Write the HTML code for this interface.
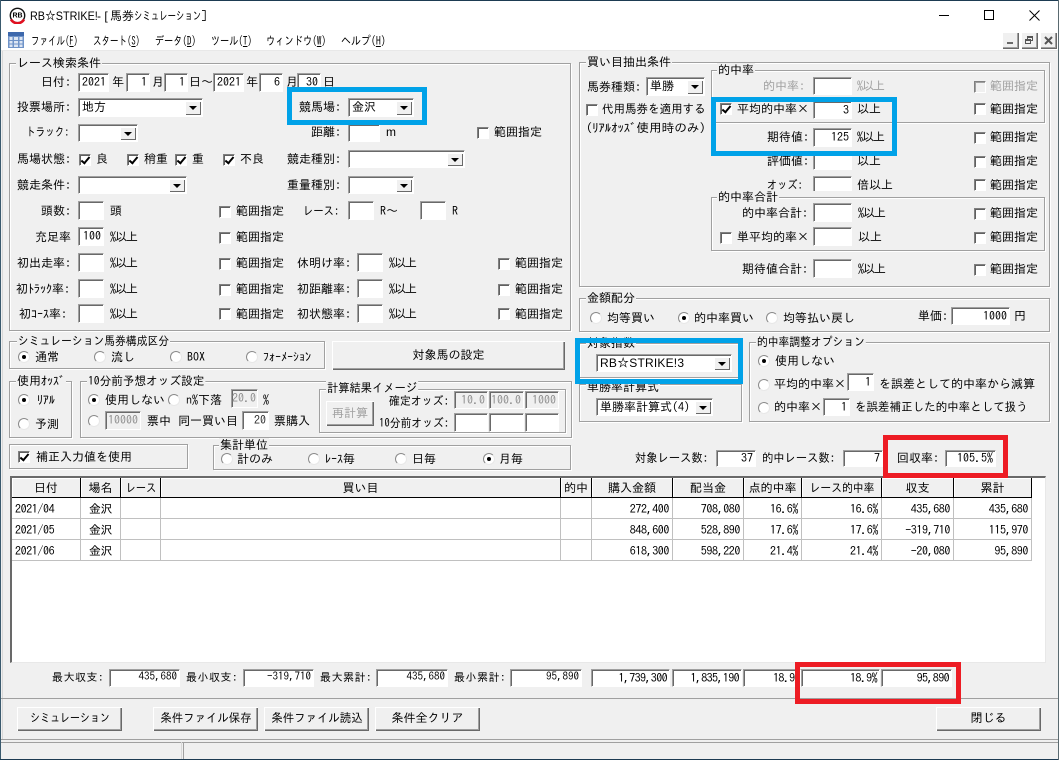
<!DOCTYPE html>
<html lang="ja"><head><meta charset="utf-8"><title>RB☆STRIKE!</title>
<style>
html,body{margin:0;padding:0;width:1059px;height:760px;overflow:hidden;background:#f0f0f0}
body{position:relative;font:12px/14px "IPAGothic","Noto Sans CJK JP",sans-serif;color:#000}
p{position:absolute;margin:0;white-space:nowrap;height:14px;line-height:14px;transform-origin:left center}
.y{color:#a0a0a0}
.q{letter-spacing:-1px}
.lg{background:#f0f0f0;padding:0 1px}
.g{position:absolute;box-sizing:border-box;border:1px solid #a0a0a0;box-shadow:1px 1px 0 #fff,inset 1px 1px 0 #fff}
em{position:absolute;display:block;box-sizing:border-box;font-style:normal;background:#fff;border:1px solid;border-color:#a0a0a0 #fff #fff #a0a0a0;box-shadow:inset 1px 1px 0 #696969;text-align:right;padding-right:2px;line-height:16px;white-space:nowrap;overflow:hidden}
em.k{text-align:left;padding-left:3px;line-height:17px}
em.d{background:#f0f0f0;color:#909090}
em u{position:absolute;right:1px;top:2px;bottom:1px;width:16px;background:#f0f0f0;box-shadow:inset 1px 1px 0 #fff,inset -1px -1px 0 #696969;text-decoration:none}
em u::after{content:"";position:absolute;left:4px;top:5px;border:4px solid transparent;border-top:4px solid #000;border-bottom:0}
i{position:absolute;display:block;box-sizing:border-box;width:12px;height:12px;background:#fff;border:1px solid;border-color:#808080 #fff #fff #808080;box-shadow:inset 1px 1px 0 #606060,0 0 0 0 #fff}
i.on::after{content:"";position:absolute;left:3px;top:0;width:3px;height:7px;border:solid #000;border-width:0 2px 2px 0;transform:rotate(40deg)}
i.gy{background:#f0f0f0;box-shadow:inset 1px 1px 0 #a0a0a0}
b{position:absolute;display:block;box-sizing:border-box;width:12px;height:12px;border-radius:50%;background:#fff;border:1px solid;border-color:#8a8a8a #e8e8e8 #e8e8e8 #8a8a8a}
b.on::after{content:"";position:absolute;left:3px;top:3px;width:4px;height:4px;border-radius:50%;background:#000}
.btn{position:absolute;box-sizing:border-box;background:#f0f0f0;text-align:center;box-shadow:inset 1px 1px 0 #fff,inset -1px -1px 0 #696969,inset -2px -2px 0 #a0a0a0;white-space:nowrap}
.hl{position:absolute;box-sizing:border-box;border:5px solid #00a2e8;z-index:5}
.rd{position:absolute;box-sizing:border-box;border:5px solid #ed1c24;z-index:5}
table{position:absolute;left:12px;top:478px;border-collapse:separate;border-spacing:0;table-layout:fixed;width:1020px}
th{height:20px;box-sizing:border-box;padding:0;font-weight:normal;background:#f0f0f0;border-right:1px solid #000;border-bottom:1px solid #000;box-shadow:inset 1px 1px 0 #fff;white-space:nowrap;overflow:hidden}
td{height:21px;box-sizing:border-box;padding:1px 3px 0 3px;border-right:1px solid #c0c0c0;border-bottom:1px solid #c0c0c0;text-align:right;white-space:nowrap;background:#fff;letter-spacing:-.4px}
.s{font-size:11px;letter-spacing:.5px}
.v{font-size:11px;letter-spacing:0;line-height:14px}
.n{letter-spacing:-.6px}
</style></head><body>
<div style="position:absolute;left:0;top:0;width:1059px;height:50px;background:#fff"></div>
<div style="position:absolute;left:0;top:0;width:1059px;height:1px;background:#1d3b52"></div>
<div style="position:absolute;left:0;top:0;width:1px;height:760px;background:#3a5a6e"></div>
<div style="position:absolute;left:0;top:759px;width:1059px;height:1px;background:#1d3b52"></div>
<div style="position:absolute;left:1058px;top:0;width:1px;height:760px;background:#5a6a70"></div>
<svg style="position:absolute;left:9px;top:7px" width="17" height="17" viewBox="0 0 17 17"><circle cx="8.500" cy="8.500" r="7.200" fill="#fff" stroke="#111" stroke-width="1.400"/><path d="M2 12.500a7.600 7.600 0 0 0 13 0" fill="none" stroke="#e01020" stroke-width="2.600"/><text x="8.500" y="10.500" font-size="7" font-weight="700" font-family="Liberation Sans" text-anchor="middle">RB</text></svg>
<p style="left:30px;top:9px;font-family:'Liberation Sans','IPAGothic',sans-serif;font-size:12px;transform:scaleX(.9)">RB☆STRIKE!</p>
<p style="left:97px;top:9px;font-family:'Liberation Sans',sans-serif;font-size:12px">- [</p>
<p style="left:110px;top:9px">馬券</p>
<p style="left:134px;top:9px;transform:scaleX(.7)">シミュレーション</p>
<p style="left:201px;top:9px">]</p>
<div style="position:absolute;left:939px;top:15px;width:10px;height:1px;background:#000"></div>
<div style="position:absolute;left:984px;top:10px;width:10px;height:10px;box-sizing:border-box;border:1px solid #000"></div>
<svg style="position:absolute;left:1029px;top:10px" width="11" height="11"><path d="M.5.5l10 10M10.500.5l-10 10" stroke="#000" fill="none"/></svg>
<svg style="position:absolute;left:8px;top:32px" width="16" height="16"><rect width="16" height="16" fill="#6f93c8"/><rect y="0" width="16" height="4" fill="#3d68ac"/><path d="M1.500 5h3v3h-3zM6 5h4v3H6zM11.500 5h3v3h-3zM1.500 9h3v2.500h-3zM6 9h4v2.500H6zM11.500 9h3v2.500h-3zM1.500 12.500h3V15h-3zM6 12.500h4V15H6zM11.500 12.500h3V15h-3z" fill="#dde6f3"/></svg>
<p style="left:31px;top:34px;transform:scaleX(.71)">ファイル(<span style="text-decoration:underline">F</span>)</p>
<p style="left:93px;top:34px;transform:scaleX(.71)">スタート(<span style="text-decoration:underline">S</span>)</p>
<p style="left:155px;top:34px;transform:scaleX(.76)">データ(<span style="text-decoration:underline">D</span>)</p>
<p style="left:211px;top:34px;transform:scaleX(.76)">ツール(<span style="text-decoration:underline">T</span>)</p>
<p style="left:266px;top:34px;transform:scaleX(.77)">ウィンドウ(<span style="text-decoration:underline">W</span>)</p>
<p style="left:341px;top:34px;transform:scaleX(.83)">ヘルプ(<span style="text-decoration:underline">H</span>)</p>
<div class="btn" style="left:1002px;top:32px;width:17px;height:17px"><div style="position:absolute;left:5px;top:10px;width:6px;height:2px;background:#6a6a6a"></div></div>
<div class="btn" style="left:1021px;top:32px;width:17px;height:17px"><div style="position:absolute;left:6px;top:4px;width:6px;height:5px;border:1px solid #555;border-top-width:2px;box-sizing:border-box"></div><div style="position:absolute;left:4px;top:7px;width:6px;height:5px;border:1px solid #555;border-top-width:2px;box-sizing:border-box;background:#f0f0f0"></div></div>
<div class="btn" style="left:1040px;top:32px;width:17px;height:17px"><svg style="position:absolute;left:4px;top:4px" width="9" height="9"><path d="M1 1l7 7M8 1L1 8" stroke="#555" stroke-width="2"/></svg></div>
<div style="position:absolute;left:1px;top:50px;width:1057px;height:1px;background:#e8e8e8"></div>
<div style="position:absolute;left:2px;top:51px;width:1px;height:688px;background:#d8d8d8"></div>

<!-- race search -->
<div class="g" style="left:9px;top:63px;width:562px;height:268px"></div>
<p class="lg" style="left:16px;top:56px">レース検索条件</p>
<p style="left:41px;top:75px">日付:</p>
<em style="left:78px;top:73px;width:31px;height:19px">2021</em><p style="left:112px;top:75px">年</p>
<em style="left:126px;top:73px;width:24px;height:19px">1</em><p style="left:152px;top:75px">月</p>
<em style="left:164px;top:73px;width:24px;height:19px">1</em><p style="left:189px;top:75px">日〜</p>
<em style="left:213px;top:73px;width:31px;height:19px">2021</em><p style="left:246px;top:75px">年</p>
<em style="left:259px;top:73px;width:24px;height:19px">6</em><p style="left:286px;top:75px">月</p>
<em style="left:297px;top:73px;width:24px;height:19px">30</em><p style="left:323px;top:75px">日</p>

<p style="left:17px;top:100px">投票場所:</p>
<em class="k" style="left:78px;top:98px;width:125px;height:19px">地方<u></u></em>
<p style="left:299px;top:100px">競馬場:</p>
<em class="k" style="left:348px;top:98px;width:66px;height:19px">金沢<u></u></em>
<div class="hl" style="left:287px;top:87px;width:140px;height:38px"></div>

<p style="left:26px;top:125px;transform:scaleX(.8)">トラック:</p>
<em class="k" style="left:78px;top:124px;width:60px;height:18px"><u></u></em>
<p style="left:311px;top:125px">距離:</p>
<em style="left:348px;top:124px;width:32px;height:18px"></em>
<p style="left:386px;top:125px;font-family:'Liberation Sans',sans-serif">m</p>
<i style="left:477px;top:127px"></i><p style="left:494px;top:125px">範囲指定</p>

<p style="left:17px;top:152px">馬場状態:</p>
<i class="on" style="left:79px;top:154px"></i><p style="left:96px;top:152px">良</p>
<i class="on" style="left:127px;top:154px"></i><p style="left:144px;top:152px">稍重</p>
<i class="on" style="left:175px;top:154px"></i><p style="left:192px;top:152px">重</p>
<i class="on" style="left:223px;top:154px"></i><p style="left:240px;top:152px">不良</p>
<p style="left:287px;top:152px">競走種別:</p>
<em class="k" style="left:348px;top:150px;width:117px;height:18px"><u></u></em>

<p style="left:17px;top:178px">競走条件:</p>
<em class="k" style="left:78px;top:176px;width:109px;height:18px"><u></u></em>
<p style="left:287px;top:178px">重量種別:</p>
<em class="k" style="left:348px;top:176px;width:66px;height:18px"><u></u></em>

<p style="left:41px;top:204px">頭数:</p>
<em style="left:78px;top:201px;width:26px;height:19px"></em><p style="left:110px;top:204px">頭</p>
<i style="left:219px;top:206px"></i><p style="left:236px;top:204px">範囲指定</p>
<p style="left:303px;top:204px;transform:scaleX(.86)">レース:</p>
<em style="left:348px;top:201px;width:26px;height:19px"></em><p style="left:380px;top:204px">R〜</p>
<em style="left:420px;top:201px;width:26px;height:19px"></em><p style="left:452px;top:204px">R</p>

<p style="left:35px;top:230px">充足率</p>
<em style="left:78px;top:227px;width:26px;height:19px">100</em><p class="q" style="left:110px;top:230px">%以上</p>
<i style="left:219px;top:232px"></i><p style="left:236px;top:230px">範囲指定</p>

<p style="left:17px;top:256px">初出走率:</p>
<em style="left:78px;top:253px;width:26px;height:19px"></em><p class="q" style="left:110px;top:256px">%以上</p>
<i style="left:219px;top:258px"></i><p style="left:236px;top:256px">範囲指定</p>
<p style="left:297px;top:256px">休明け率:</p>
<em style="left:357px;top:253px;width:26px;height:19px"></em><p class="q" style="left:389px;top:256px">%以上</p>
<i style="left:498px;top:258px"></i><p style="left:515px;top:256px">範囲指定</p>

<p style="left:16px;top:282px">初ﾄﾗｯｸ率:</p>
<em style="left:78px;top:279px;width:26px;height:19px"></em><p class="q" style="left:110px;top:282px">%以上</p>
<i style="left:219px;top:284px"></i><p style="left:236px;top:282px">範囲指定</p>
<p style="left:297px;top:282px">初距離率:</p>
<em style="left:357px;top:279px;width:26px;height:19px"></em><p class="q" style="left:389px;top:282px">%以上</p>
<i style="left:498px;top:284px"></i><p style="left:515px;top:282px">範囲指定</p>

<p style="left:19px;top:307px">初ｺｰｽ率:</p>
<em style="left:78px;top:304px;width:26px;height:19px"></em><p class="q" style="left:110px;top:307px">%以上</p>
<i style="left:219px;top:308px"></i><p style="left:236px;top:307px">範囲指定</p>
<p style="left:297px;top:307px">初状態率:</p>
<em style="left:357px;top:304px;width:26px;height:19px"></em><p class="q" style="left:389px;top:307px">%以上</p>
<i style="left:498px;top:308px"></i><p style="left:515px;top:307px">範囲指定</p>

<!-- simulation kind -->
<div class="g" style="left:9px;top:341px;width:316px;height:28px"></div>
<p class="lg" style="left:17px;top:334px;transform:scaleX(.9)">シミュレーション馬券構成区分</p>
<b class="on" style="left:18px;top:351px"></b><p style="left:35px;top:350px">通常</p>
<b style="left:94px;top:351px"></b><p style="left:111px;top:350px">流し</p>
<b style="left:170px;top:351px"></b><p style="left:187px;top:350px">BOX</p>
<b style="left:246px;top:351px"></b><p style="left:263px;top:350px">ﾌｫｰﾒｰｼｮﾝ</p>
<div class="btn" style="left:332px;top:341px;width:233px;height:29px;line-height:28px">対象馬の設定</div>

<!-- odds -->
<div class="g" style="left:9px;top:381px;width:63px;height:57px"></div>
<p class="lg" style="left:16px;top:374px">使用ｵｯｽﾞ</p>
<b class="on" style="left:18px;top:394px"></b><p style="left:37px;top:393px">ﾘｱﾙ</p>
<b style="left:18px;top:418px"></b><p style="left:35px;top:417px">予測</p>

<div class="g" style="left:80px;top:381px;width:492px;height:57px"></div>
<p class="lg" style="left:87px;top:374px;transform:scaleX(.97)">10分前予想オッズ設定</p>
<b class="on" style="left:88px;top:394px"></b><p style="left:105px;top:393px">使用しない</p>
<b style="left:168px;top:394px"></b><p style="left:186px;top:393px">n%下落</p>
<em class="d" style="left:231px;top:389px;width:27px;height:19px">20.0</em><p style="left:263px;top:393px">%</p>
<b style="left:88px;top:415px"></b>
<em class="d" style="left:105px;top:411px;width:36px;height:19px">10000</em>
<p style="left:147px;top:414px">票中</p><p style="left:178px;top:414px">同一買い目</p>
<em style="left:242px;top:411px;width:27px;height:19px;color:#333">20</em><p style="left:274px;top:414px">票購入</p>

<div class="g" style="left:319px;top:389px;width:247px;height:44px"></div>
<p class="lg" style="left:326px;top:381px;transform:scaleX(.94)">計算結果イメージ</p>
<div class="btn y" style="left:326px;top:401px;width:48px;height:25px;line-height:24px">再計算</div>
<p style="left:389px;top:394px;transform:scaleX(.91)">確定オッズ:</p>
<em class="d" style="left:454px;top:391px;width:34px;height:18px">10.0</em>
<em class="d" style="left:489px;top:391px;width:35px;height:18px">100.0</em>
<em class="d" style="left:525px;top:391px;width:34px;height:18px">1000</em>
<p style="left:379px;top:416px;transform:scaleX(.9)">10分前オッズ:</p>
<em style="left:454px;top:413px;width:34px;height:19px"></em>
<em style="left:489px;top:413px;width:35px;height:19px"></em>
<em style="left:525px;top:413px;width:34px;height:19px"></em>

<div class="g" style="left:9px;top:444px;width:179px;height:25px"></div>
<i class="on" style="left:18px;top:451px"></i><p style="left:36px;top:450px">補正入力値を使用</p>

<div class="g" style="left:213px;top:445px;width:358px;height:25px"></div>
<p class="lg" style="left:219px;top:438px">集計単位</p>
<b style="left:221px;top:453px"></b><p style="left:237px;top:452px">計のみ</p>
<b style="left:308px;top:453px"></b><p style="left:325px;top:452px">ﾚｰｽ毎</p>
<b style="left:395px;top:453px"></b><p style="left:412px;top:452px">日毎</p>
<b class="on" style="left:483px;top:453px"></b><p style="left:499px;top:452px">月毎</p>

<!-- buy conditions -->
<div class="g" style="left:579px;top:62px;width:471px;height:225px"></div>
<p class="lg" style="left:586px;top:55px">買い目抽出条件</p>
<p style="left:587px;top:80px">馬券種類:</p>
<em class="k" style="left:646px;top:77px;width:59px;height:19px">単勝<u></u></em>
<i style="left:586px;top:104px"></i><p style="left:602px;top:102px;transform:scaleX(.96)">代用馬券を適用する</p>
<p style="left:586px;top:121px;transform:scaleX(1.05)">(ﾘｱﾙｵｯｽﾞ使用時のみ)</p>

<div class="g" style="left:711px;top:70px;width:334px;height:53px"></div>
<p class="lg" style="left:717px;top:63px">的中率</p>
<p class="y" style="left:763px;top:79px">的中率:</p>
<em style="left:813px;top:77px;width:39px;height:18px"></em><p class="y q" style="left:857px;top:79px">%以上</p>
<i class="gy" style="left:974px;top:81px"></i><p class="y" style="left:990px;top:79px">範囲指定</p>
<i class="on" style="left:720px;top:103px"></i><p style="left:737px;top:102px">平均的中率×</p>
<em style="left:813px;top:101px;width:39px;height:18px">3</em><p style="left:857px;top:102px">以上</p>
<i style="left:974px;top:103px"></i><p style="left:990px;top:102px">範囲指定</p>
<p style="left:767px;top:130px">期待値:</p>
<em style="left:813px;top:128px;width:39px;height:19px">125</em><p class="q" style="left:857px;top:130px">%以上</p>
<i style="left:974px;top:132px"></i><p style="left:990px;top:130px">範囲指定</p>
<div class="hl" style="left:711px;top:97px;width:186px;height:59px"></div>
<p style="left:767px;top:154px">評価値:</p>
<em style="left:813px;top:152px;width:39px;height:18px"></em><p style="left:857px;top:154px">以上</p>
<i style="left:974px;top:156px"></i><p style="left:990px;top:154px">範囲指定</p>
<p style="left:767px;top:178px;transform:scaleX(.85)">オッズ:</p>
<em style="left:813px;top:176px;width:39px;height:18px"></em><p style="left:857px;top:178px">倍以上</p>
<i style="left:974px;top:179px"></i><p style="left:990px;top:178px">範囲指定</p>

<div class="g" style="left:711px;top:197px;width:334px;height:54px"></div>
<div style="position:absolute;left:800px;top:191px;width:70px;height:6px;background:#f0f0f0"></div>
<p class="lg" style="left:717px;top:190px">的中率合計</p>
<p style="left:742px;top:206px">的中率合計:</p>
<em style="left:813px;top:203px;width:39px;height:19px"></em><p class="q" style="left:858px;top:206px">%以上</p>
<i style="left:974px;top:208px"></i><p style="left:990px;top:206px">範囲指定</p>
<i style="left:720px;top:232px"></i><p style="left:737px;top:230px">単平均的率×</p>
<em style="left:813px;top:227px;width:39px;height:19px"></em><p style="left:858px;top:230px">以上</p>
<i style="left:974px;top:232px"></i><p style="left:990px;top:230px">範囲指定</p>
<p style="left:742px;top:262px">期待値合計:</p>
<em style="left:813px;top:259px;width:39px;height:19px"></em><p class="q" style="left:858px;top:262px">%以上</p>
<i style="left:974px;top:264px"></i><p style="left:990px;top:262px">範囲指定</p>

<!-- amount -->
<div class="g" style="left:579px;top:298px;width:471px;height:34px"></div>
<p class="lg" style="left:586px;top:291px">金額配分</p>
<b style="left:590px;top:312px"></b><p style="left:607px;top:311px">均等買い</p>
<b class="on" style="left:678px;top:312px"></b><p style="left:694px;top:311px">的中率買い</p>
<b style="left:766px;top:312px"></b><p style="left:783px;top:311px">均等払い戻し</p>
<p style="left:918px;top:309px">単価:</p>
<em style="left:951px;top:307px;width:59px;height:18px">1000</em><p style="left:1014px;top:309px">円</p>

<!-- index -->
<div class="g" style="left:579px;top:343px;width:163px;height:35px"></div>
<p class="lg" style="left:586px;top:336px">対象指数</p>
<em class="k" style="left:596px;top:354px;width:136px;height:18px;font-family:'Liberation Sans','IPAGothic',sans-serif;letter-spacing:.2px">RB☆STRIKE!3<u></u></em>
<div class="g" style="left:579px;top:384px;width:163px;height:38px"></div>
<p class="lg" style="left:586px;top:380px">単勝率計算式</p>
<em class="k" style="left:596px;top:398px;width:117px;height:18px">単勝率計算式(4)<u></u></em>
<div class="hl" style="left:575px;top:338px;width:168px;height:46px"></div>

<!-- adjust -->
<div class="g" style="left:749px;top:342px;width:301px;height:80px"></div>
<p class="lg" style="left:756px;top:335px;transform:scaleX(.9)">的中率調整オプション</p>
<b class="on" style="left:758px;top:355px"></b><p style="left:775px;top:354px">使用しない</p>
<b style="left:758px;top:379px"></b><p style="left:774px;top:377px">平均的中率×</p>
<em style="left:847px;top:373px;width:27px;height:18px">1</em><p style="left:879px;top:377px">を誤差として的中率から減算</p>
<b style="left:758px;top:402px"></b><p style="left:774px;top:400px">的中率×</p>
<em style="left:823px;top:398px;width:27px;height:18px">1</em><p style="left:855px;top:400px;transform:scaleX(.96)">を誤差補正した的中率として扱う</p>

<p style="left:635px;top:451px;transform:scaleX(.94)">対象レース数:</p>
<em style="left:716px;top:450px;width:40px;height:17px;line-height:15px">37</em>
<p style="left:762px;top:451px;transform:scaleX(.94)">的中レース数:</p>
<em style="left:843px;top:450px;width:40px;height:17px;line-height:15px">7</em>
<p style="left:897px;top:451px">回収率:</p>
<em style="left:945px;top:450px;width:51px;height:17px;line-height:15px">105.5%</em>
<div class="rd" style="left:883px;top:435px;width:125px;height:43px"></div>

<!-- table -->
<div style="position:absolute;left:10px;top:476px;width:1036px;height:187px;background:#fff;border-top:2px solid #696969;border-left:2px solid #696969;border-right:1px solid #e8e8e8;border-bottom:1px solid #e8e8e8;box-sizing:border-box"></div>
<table><colgroup><col style="width:69px"><col style="width:40px"><col style="width:40px"><col style="width:400px"><col style="width:31px"><col style="width:81px"><col style="width:71px"><col style="width:58px"><col style="width:80px"><col style="width:72px"><col style="width:78px"></colgroup>
<tr><th>日付</th><th>場名</th><th><span style="display:inline-block;transform:scaleX(.85)">レース</span></th><th>買い目</th><th>的中</th><th>購入金額</th><th>配当金</th><th>点的中率</th><th><span style="display:inline-block;transform:scaleX(.9)">レース的中率</span></th><th>収支</th><th>累計</th></tr>
<tr><td style="text-align:left">2021/04</td><td style="text-align:center">金沢</td><td></td><td></td><td></td><td>272,400</td><td>708,080</td><td>16.6%</td><td>16.6%</td><td>435,680</td><td>435,680</td></tr>
<tr><td style="text-align:left">2021/05</td><td style="text-align:center">金沢</td><td></td><td></td><td></td><td>848,600</td><td>528,890</td><td>17.6%</td><td>17.6%</td><td>-319,710</td><td>115,970</td></tr>
<tr><td style="text-align:left">2021/06</td><td style="text-align:center">金沢</td><td></td><td></td><td></td><td>618,300</td><td>598,220</td><td>21.4%</td><td>21.4%</td><td>-20,080</td><td>95,890</td></tr>
</table>

<!-- totals -->
<p class="s" style="left:52px;top:671px">最大収支:</p>
<em class="v" style="left:109px;top:669px;width:71px;height:18px">435,680</em>
<p class="s" style="left:186px;top:671px">最小収支:</p>
<em class="v" style="left:243px;top:669px;width:71px;height:18px">-319,710</em>
<p class="s" style="left:320px;top:671px">最大累計:</p>
<em class="v" style="left:376px;top:669px;width:72px;height:18px">435,680</em>
<p class="s" style="left:454px;top:671px">最小累計:</p>
<em class="v" style="left:510px;top:669px;width:72px;height:18px">95,890</em>
<em class="n" style="left:591px;top:669px;width:79px;height:18px">1,739,300</em>
<em class="n" style="left:672px;top:669px;width:70px;height:18px">1,835,190</em>
<em class="n" style="left:743px;top:669px;width:58px;height:18px;padding-right:0">18.9%</em>
<em class="n" style="left:801px;top:669px;width:79px;height:18px">18.9%</em>
<em class="n" style="left:881px;top:669px;width:71px;height:18px">95,890</em>
<div class="rd" style="left:795px;top:662px;width:166px;height:42px"></div>
<div style="position:absolute;left:1px;top:698px;width:1057px;height:1px;background:#a0a0a0"></div>

<!-- buttons -->
<div class="btn" style="left:17px;top:707px;width:105px;height:24px;line-height:23px"><span style="display:inline-block;transform:scaleX(.83)">シミュレーション</span></div>
<div class="btn" style="left:153px;top:707px;width:105px;height:24px;line-height:23px"><span style="display:inline-block;transform:scaleX(.95)">条件ファイル保存</span></div>
<div class="btn" style="left:264px;top:707px;width:105px;height:24px;line-height:23px"><span style="display:inline-block;transform:scaleX(.95)">条件ファイル読込</span></div>
<div class="btn" style="left:375px;top:707px;width:105px;height:24px;line-height:23px">条件全クリア</div>
<div class="btn" style="left:936px;top:707px;width:105px;height:24px;line-height:23px">閉じる</div>

<!-- status -->
<div style="position:absolute;left:1px;top:739px;width:1057px;height:1px;background:#a0a0a0"></div>
<div style="position:absolute;left:1px;top:742px;width:1057px;height:1px;background:#a0a0a0"></div>
<div style="position:absolute;left:181px;top:742px;width:1px;height:17px;background:#d8d8d8"></div>
<div style="position:absolute;left:183px;top:742px;width:1px;height:17px;background:#a0a0a0"></div>
</body></html>
